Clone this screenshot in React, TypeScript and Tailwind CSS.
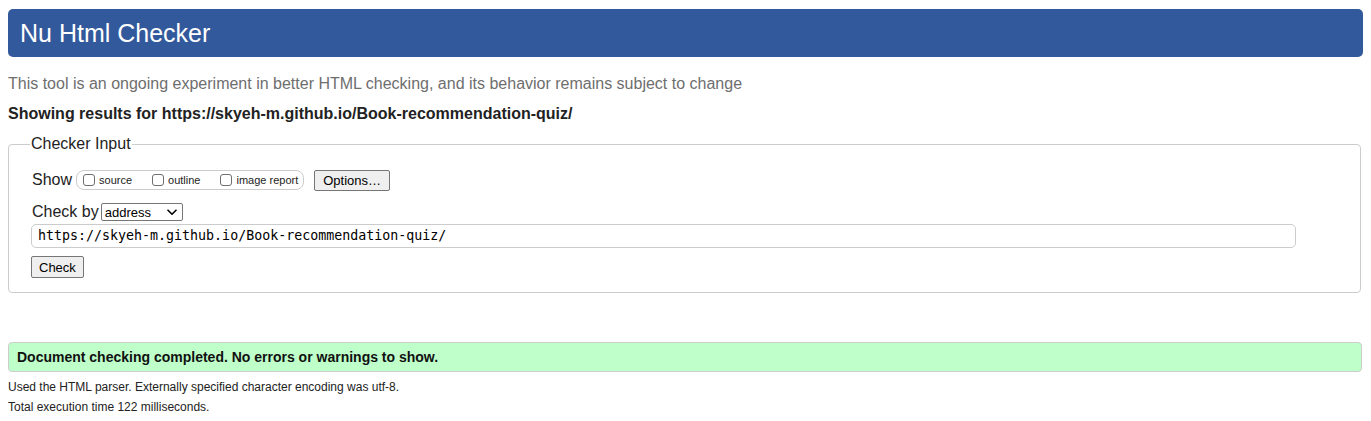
export default function App() {
  const font = { fontFamily: '"Liberation Sans", Arial, Helvetica, sans-serif' };
  return (
    <div className="min-h-[421px] w-full bg-white px-2 pt-[9px] text-[#222]" style={font}>
      <div className="flex h-[48px] items-center rounded-[5px] bg-[#32599b] px-3">
        <h1 className="text-[25px] leading-none text-white">Nu Html Checker</h1>
      </div>
      <p className="mt-[17px] text-[16px] leading-[20px] text-[#6e6e6e]">
        This tool is an ongoing experiment in better HTML checking, and its behavior remains subject to change
      </p>
      <p className="mt-[10px] text-[16px] font-bold leading-[20px] text-[#222]">
        Showing results for https://skyeh-m.github.io/Book-recommendation-quiz/
      </p>
      <fieldset className="mt-[11px] mr-[2px] rounded-[4px] border border-[#cccccc] pb-[14px] pl-[23px] pr-[22px]">
        <legend className="-ml-[2px] px-[1px] text-[16px] leading-[18px] text-[#222]">Checker Input</legend>
        <div className="mt-[16px] flex h-[22px] items-center">
          <span className="text-[16px] leading-[20px]">Show</span>
          <div className="ml-[4px] flex h-[20px] items-center rounded-[8px] border border-[#cccccc] pl-[6px] pr-[5px]">
            <label className="flex items-center">
              <span className="h-[12px] w-[12px] rounded-[3px] border border-[#6f6f6f] bg-white" />
              <span className="ml-[4px] text-[11px] leading-none">source</span>
            </label>
            <label className="ml-[20px] flex items-center">
              <span className="h-[12px] w-[12px] rounded-[3px] border border-[#6f6f6f] bg-white" />
              <span className="ml-[4px] text-[11px] leading-none">outline</span>
            </label>
            <label className="ml-[20px] flex items-center">
              <span className="h-[12px] w-[12px] rounded-[3px] border border-[#6f6f6f] bg-white" />
              <span className="ml-[4px] text-[11px] leading-none">image report</span>
            </label>
          </div>
          <button className="ml-[10px] flex h-[21px] items-center rounded-[2px] border border-[#767676] bg-[#efefef] px-[8px] text-[13px] leading-none text-black">
            Options…
          </button>
        </div>
        <div className="mt-[12px] flex h-[18px] items-center">
          <span className="text-[16px] leading-[20px]">Check by</span>
          <div className="ml-[2px] flex h-[18px] w-[82px] items-center justify-between rounded-[2px] border border-[#767676] bg-white pl-[3px] pr-[5px]">
            <span className="text-[13px] leading-none text-black">address</span>
            <svg width="10" height="7" viewBox="0 0 10 7" fill="none">
              <path d="M1 1.2 L5 5.2 L9 1.2" stroke="#000" strokeWidth="1.6" strokeLinecap="round" strokeLinejoin="round" />
            </svg>
          </div>
        </div>
        <div className="mt-[3px] flex h-[24px] w-[1265px] -ml-[1px] items-center rounded-[5px] border border-[#cccccc] bg-white px-[6px]">
          <span
            className="text-[13.3px] leading-none text-black"
            style={{ fontFamily: '"DejaVu Sans Mono", "Liberation Mono", monospace' }}
          >
            https://skyeh-m.github.io/Book-recommendation-quiz/
          </span>
        </div>
        <button className="-ml-[1px] mt-[8px] flex h-[22px] items-center rounded-[2px] border border-[#767676] bg-[#efefef] px-[7px] text-[13px] leading-none text-black">
          Check
        </button>
      </fieldset>
      <div className="mt-[49px] mr-[1px] flex h-[30px] items-center rounded-[4px] border border-[#cccccc] bg-[#bfffca] px-[8px]">
        <span className="text-[14px] font-bold leading-none text-[#111]">
          Document checking completed. No errors or warnings to show.
        </span>
      </div>
      <p className="mt-[8px] text-[12px] leading-[14px] text-[#222]">
        Used the HTML parser. Externally specified character encoding was utf-8.
      </p>
      <p className="mt-[6px] text-[12px] leading-[14px] text-[#222]">Total execution time 122 milliseconds.</p>
    </div>
  );
}
